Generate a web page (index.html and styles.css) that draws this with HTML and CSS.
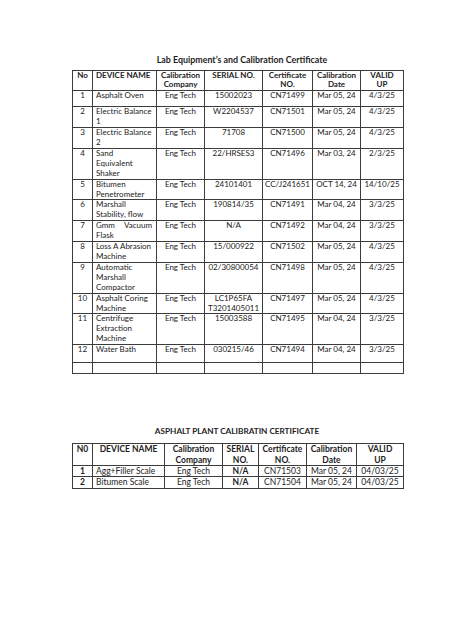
FILE: index.html
```html
<!DOCTYPE html>
<html>
<head>
<meta charset="utf-8">
<link rel="stylesheet" href="styles.css">
</head>
<body>
<div class="page">
  <h1 class="title t1">Lab Equipment’s and Calibration Certificate</h1>
  <table class="grid lab">
    <colgroup>
      <col class="c-no"><col class="c-dev"><col class="c-co"><col class="c-ser"><col class="c-cert"><col class="c-date"><col class="c-valid">
    </colgroup>
    <thead>
      <tr>
        <th class="ctr">No</th>
        <th class="lft">DEVICE NAME</th>
        <th class="ctr">Calibration<br>Company</th>
        <th class="ctr">SERIAL NO.</th>
        <th class="ctr">Certificate<br>NO.</th>
        <th class="ctr">Calibration<br>Date</th>
        <th class="ctr">VALID<br>UP</th>
      </tr>
    </thead>
    <tbody>
      <tr class="r-first"><td>1</td><td class="lft">Asphalt Oven</td><td>Eng Tech</td><td>15002023</td><td>CN71499</td><td>Mar 05, 24</td><td>4/3/25</td></tr>
      <tr><td>2</td><td class="lft">Electric Balance<br>1</td><td>Eng Tech</td><td>W2204537</td><td>CN71501</td><td>Mar 05, 24</td><td>4/3/25</td></tr>
      <tr><td>3</td><td class="lft">Electric Balance<br>2</td><td>Eng Tech</td><td>71708</td><td>CN71500</td><td>Mar 05, 24</td><td>4/3/25</td></tr>
      <tr><td>4</td><td class="lft">Sand<br>Equivalent<br>Shaker</td><td>Eng Tech</td><td>22/HRSES3</td><td>CN71496</td><td>Mar 03, 24</td><td>2/3/25</td></tr>
      <tr><td>5</td><td class="lft">Bitumen<br>Penetrometer</td><td>Eng Tech</td><td>24101401</td><td>CC/J241651</td><td>OCT 14, 24</td><td>14/10/25</td></tr>
      <tr><td>6</td><td class="lft">Marshall<br>Stability, flow</td><td>Eng Tech</td><td>190814/35</td><td>CN71491</td><td>Mar 04, 24</td><td>3/3/25</td></tr>
      <tr><td>7</td><td class="lft"><span class="just"><span>Gmm</span><span>Vacuum</span></span>Flask</td><td>Eng Tech</td><td>N/A</td><td>CN71492</td><td>Mar 04, 24</td><td>3/3/25</td></tr>
      <tr><td>8</td><td class="lft">Loss A Abrasion<br>Machine</td><td>Eng Tech</td><td>15/000922</td><td>CN71502</td><td>Mar 05, 24</td><td>4/3/25</td></tr>
      <tr><td>9</td><td class="lft">Automatic<br>Marshall<br>Compactor</td><td>Eng Tech</td><td>02/30800054</td><td>CN71498</td><td>Mar 05, 24</td><td>4/3/25</td></tr>
      <tr><td>10</td><td class="lft">Asphalt Coring<br>Machine</td><td>Eng Tech</td><td>LC1P65FA<br>T3201405011</td><td>CN71497</td><td>Mar 05, 24</td><td>4/3/25</td></tr>
      <tr><td>11</td><td class="lft">Centrifuge<br>Extraction<br>Machine</td><td>Eng Tech</td><td>15003588</td><td>CN71495</td><td>Mar 04, 24</td><td>3/3/25</td></tr>
      <tr class="r-last"><td>12</td><td class="lft">Water Bath</td><td>Eng Tech</td><td>030215/46</td><td>CN71494</td><td>Mar 04, 24</td><td>3/3/25</td></tr>
      <tr class="r-empty"><td></td><td></td><td></td><td></td><td></td><td></td><td></td></tr>
    </tbody>
  </table>

  <h1 class="title t2">ASPHALT PLANT CALIBRATIN CERTIFICATE</h1>
  <table class="grid plant">
    <colgroup>
      <col class="p-no"><col class="p-dev"><col class="p-co"><col class="p-ser"><col class="p-cert"><col class="p-date"><col class="p-valid">
    </colgroup>
    <thead>
      <tr>
        <th>N0</th>
        <th>DEVICE NAME</th>
        <th>Calibration<br>Company</th>
        <th>SERIAL<br>NO.</th>
        <th>Certificate<br>NO.</th>
        <th>Calibration<br>Date</th>
        <th>VALID<br>UP</th>
      </tr>
    </thead>
    <tbody>
      <tr><td class="b">1</td><td class="lft">Agg+Filler Scale</td><td>Eng Tech</td><td class="b">N/A</td><td>CN71503</td><td>Mar 05, 24</td><td>04/03/25</td></tr>
      <tr><td class="b">2</td><td class="lft">Bitumen Scale</td><td>Eng Tech</td><td class="b">N/A</td><td>CN71504</td><td>Mar 05, 24</td><td>04/03/25</td></tr>
    </tbody>
  </table>
</div>
</body>
</html>
```

FILE: styles.css
```css
html, body {
  margin: 0;
  padding: 0;
  background: #ffffff;
}

.page {
  width: 474px;
  height: 632px;
  font-family: Lato, "Liberation Sans", sans-serif;
  color: #222222;
  padding-top: 54px;
  box-sizing: border-box;
}

.title {
  margin: 0;
  font-weight: 700;
  text-align: center;
  color: #1e1e1e;
}

.t1 {
  font-size: 8.9px;
  line-height: 12px;
  padding-left: 10px;
  margin-bottom: 3.5px;
}

.t2 {
  font-size: 8.2px;
  line-height: 12px;
  margin-top: 51px;
  margin-bottom: 6px;
}

.grid {
  border-collapse: collapse;
  table-layout: fixed;
  width: 331px;
  margin: 0 0 0 72px;
}

.grid th,
.grid td {
  border: 1px solid #3c3c3c;
  padding: 0 2px;
  vertical-align: top;
  text-align: center;
  white-space: nowrap;
  overflow: hidden;
}

.lab th,
.lab td {
  font-size: 8px;
  line-height: 9.9px;
}

.lab th {
  font-weight: 700;
}

.grid .lft {
  text-align: left;
  padding-left: 3px;
}

.grid .ctr {
  text-align: center;
}

.lab .r-first { height: 16px; }
.lab .r-last { height: 18px; }
.lab .r-empty { height: 11px; }

.just {
  display: flex;
  justify-content: space-between;
  padding-right: 2px;
}

.c-no { width: 20px; }
.c-dev { width: 64px; }
.c-co { width: 48px; }
.c-ser { width: 58px; }
.c-cert { width: 50px; }
.c-date { width: 48px; }
.c-valid { width: 43px; }

.plant th,
.plant td {
  font-size: 8.5px;
  line-height: 10.4px;
  padding: 0 1px;
}

.plant td.lft {
  padding-left: 3px;
}

.plant th {
  font-weight: 700;
}

.plant .b {
  font-weight: 700;
}

.p-no { width: 20px; }
.p-dev { width: 72px; }
.p-co { width: 58px; }
.p-ser { width: 36px; }
.p-cert { width: 48px; }
.p-date { width: 50px; }
.p-valid { width: 47px; }
```
